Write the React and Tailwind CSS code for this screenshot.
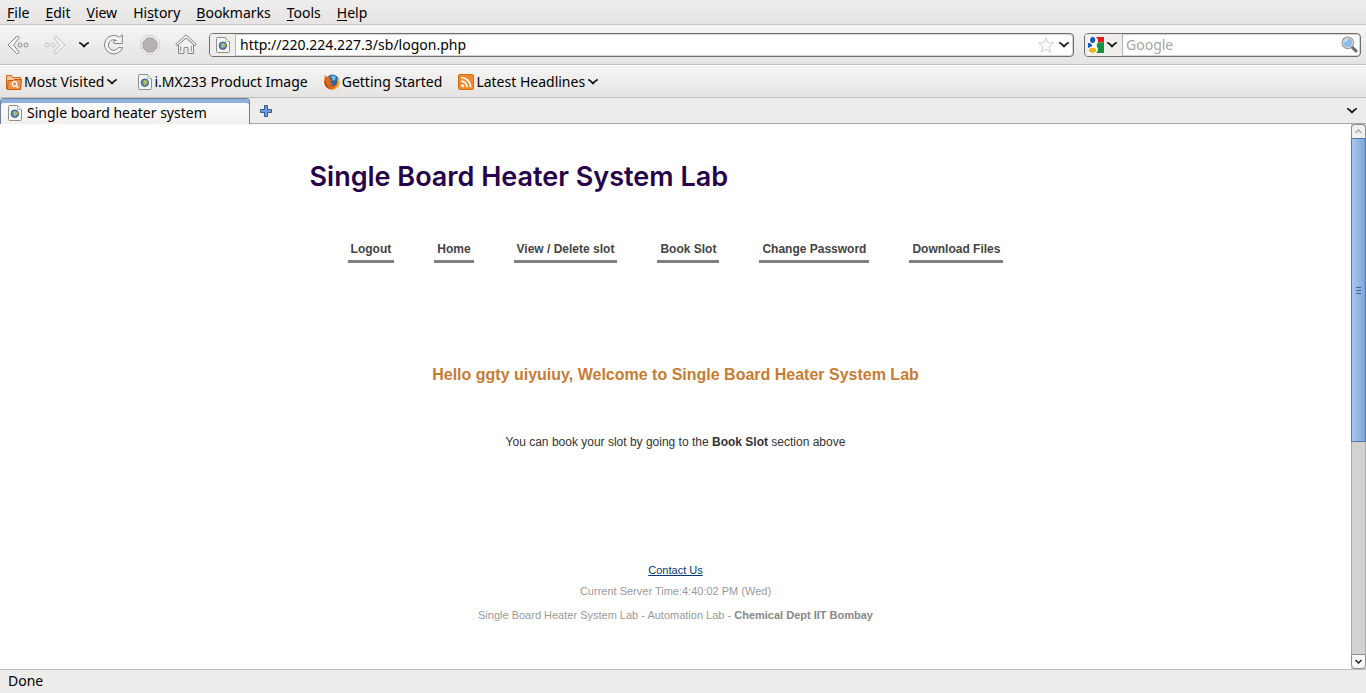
import React from "react";

const menus = [
  ["", "F", "ile"],
  ["", "E", "dit"],
  ["", "V", "iew"],
  ["Hi", "s", "tory"],
  ["", "B", "ookmarks"],
  ["", "T", "ools"],
  ["", "H", "elp"],
];

const links = ["Logout", "Home", "View / Delete slot", "Book Slot", "Change Password", "Download Files"];

function Chevron() {
  return (
    <svg width="12" height="8" viewBox="0 0 12 8" className="shrink-0" aria-hidden="true">
      <path d="M1.2 1.500C3 2.200 4.600 3.800 6 5.400C7.400 3.800 9 2.200 10.800 1.500" fill="none" stroke="#111" strokeWidth="1.800" />
    </svg>
  );
}

function PageIcon() {
  return (
    <svg width="14" height="16" viewBox="0 0 14 16" className="shrink-0" aria-hidden="true">
      <path d="M1.500.5h8l4 4v10q0 1-1 1h-11q-1 0-1-1v-13q0-1 1-1z" fill="#f5f5f3" stroke="#8f8f89" />
      <path d="M9.500.5v4h4z" fill="#fff" stroke="#b0b0aa" strokeWidth=".8" />
      <circle cx="6.800" cy="8.700" r="3.700" fill="#5c8cc4" stroke="#345c90" />
      <path d="M5.500 6.800l1.600-1 2.300 1.400-.2 2-1.800 1.400-.8 1-1-2z" fill="#b3bd5c" />
    </svg>
  );
}

function BackIcon({ flip = false }) {
  return (
    <svg width="22" height="20" viewBox="0 0 22 20" className={flip ? "-scale-x-100 opacity-40" : ""} aria-hidden="true">
      <path d="M9.500 1.500L1 10l8.500 8.500q2 .8 2.800-1.200L6.600 10l5.700-7.300q-.8-2-2.800-1.200z" fill="#f5f5f4" stroke="#858585" strokeLinejoin="round" />
      <circle cx="13" cy="10" r="2" fill="#eee" stroke="#8b8b8b" />
      <circle cx="19" cy="10" r="2" fill="#eee" stroke="#8b8b8b" />
    </svg>
  );
}

function ReloadIcon() {
  return (
    <svg width="20" height="21" viewBox="0 0 20 21" aria-hidden="true">
      <path
        d="M15.300 3.200L18.300.8V9.500H9.800V6.600H12.700A5.300 5.300 0 1 0 14.300 13.600H18.600A9.300 9.300 0 1 1 15.300 3.200z"
        fill="#f3f3f2"
        stroke="#858585"
        strokeLinejoin="round"
      />
    </svg>
  );
}

function StopIcon() {
  return (
    <svg width="20" height="20" viewBox="0 0 20 20" aria-hidden="true">
      <path d="M6 .7h8L19.300 6v8L14 19.300H6L.7 14V6z" fill="#f1f1f0" stroke="#d0d0cf" />
      <path d="M7 3h6l4 4v6l-4 4H7l-4-4V7z" fill="#b7b0b0" stroke="#aaa4a4" />
    </svg>
  );
}

function HomeIcon() {
  return (
    <svg width="22" height="21" viewBox="0 0 22 21" aria-hidden="true">
      <path d="M3.500 10v9.500H9v-6h4v6h5.500V10L11 4z" fill="#f2f2f1" stroke="#858585" />
      <path d="M2 11.800L.8 10.200 11 .9l10.200 9.300-1.200 1.600-9-7.800z" fill="#fafafa" stroke="#7f7f7f" strokeLinejoin="round" />
      <path d="M5.700 12v5.500M16.300 12v5.500M9 13.500h4" stroke="#8d8d8d" />
    </svg>
  );
}

function StarIcon() {
  return (
    <svg width="16" height="16" viewBox="0 0 16 16" aria-hidden="true">
      <path d="M8 .8l2 5h5.300l-4.200 3.600 1.500 5.700L8 12l-4.600 3.100 1.500-5.700L.7 5.800H6z" fill="#fff" stroke="#cfcfcf" strokeLinejoin="round" />
    </svg>
  );
}

function GoogleIcon() {
  return (
    <svg width="16" height="16" viewBox="0 0 16 16" aria-hidden="true">
      <path d="M8 0h8v5.500H8z" fill="#ee1c1c" />
      <path d="M8 16c2-1.600 2.500-4 .8-6.200C8 8.300 9 7.500 10 5.500h6V16z" fill="#0f953f" />
      <path d="M0 0h8c1.500 2 3 3.500 1.500 5.500-1.500 2-1.500 3-.5 4.300 1.500 2.200 1 4.700-1 6.200H0z" fill="#fff" />
      <path d="M0 5.800C3 6 4.500 8 4 9.300L0 11z" fill="#1858b8" />
      <ellipse cx="4.700" cy="3" rx="2.600" ry="3" fill="#1858b8" />
      <ellipse cx="4.500" cy="13.300" rx="3.700" ry="2.500" fill="#f5b411" />
    </svg>
  );
}

function SearchIcon() {
  return (
    <svg width="17" height="17" viewBox="0 0 17 17" aria-hidden="true">
      <path d="M11 11l4 4" stroke="#666" strokeWidth="3" strokeLinecap="round" />
      <circle cx="6.800" cy="6.800" r="5.400" fill="#8fbbea" stroke="#8d8d8d" strokeWidth="1.800" />
      <circle cx="6.800" cy="6.800" r="4.900" fill="none" stroke="#ececec" strokeWidth=".9" />
      <path d="M3.800 6.500A3 3 0 0 1 7 3.600" fill="none" stroke="#d5e7fa" strokeWidth="1.500" />
    </svg>
  );
}

function FolderIcon() {
  return (
    <svg width="16" height="16" viewBox="0 0 16 16" className="shrink-0" aria-hidden="true">
      <path d="M.5 15V1.500h5l1 2h8V15z" fill="#f7c79c" stroke="#cf6416" />
      <path d="M2 6.500h5l1-1h7.500l-1 10h-13z" fill="#eb9149" stroke="#c95b0c" />
      <circle cx="8.500" cy="10" r="2.300" fill="none" stroke="#fff" strokeWidth="1.200" />
      <path d="M10.200 11.700l2 2" stroke="#fff" strokeWidth="1.400" />
    </svg>
  );
}

function FirefoxIcon() {
  return (
    <svg width="16" height="16" viewBox="0 0 16 16" className="shrink-0" aria-hidden="true">
      <circle cx="8.500" cy="7" r="6.500" fill="#2c64a6" />
      <path d="M7 2q3-1.500 5 1l-1 3-2 1z" fill="#73bfe9" />
      <path d="M1 1.200L3.200 3Q5 2 6.300 3L5.500 5l2.400 1.200L6 7.500q.5 2 3 1.500-1 2.500-3.500 2 4 2.500 7-1 1.500-2 .5-6.500Q17 8 14.500 12 12 16 7.500 15.700.5 15 .4 8 .3 4 1 1.200z" fill="#df681b" />
      <path d="M13.300 3.500Q17 8 14.500 12 12 16 7.500 15.700q5-2 6.200-6.200z" fill="#f5b535" />
      <path d="M.8 5Q2 12 6 14.800.5 13 .4 8z" fill="#b53b12" />
    </svg>
  );
}

function FeedIcon() {
  return (
    <svg width="16" height="16" viewBox="0 0 16 16" className="shrink-0" aria-hidden="true">
      <rect x=".5" y=".5" width="15" height="15" rx="1.500" fill="#ef8b2c" stroke="#d96d10" />
      <circle cx="4.500" cy="11.700" r="1.500" fill="#fff" />
      <path d="M3 7.200a6 6 0 0 1 6 6M3 3.500a9.700 9.700 0 0 1 9.700 9.700" fill="none" stroke="#fff" strokeWidth="1.700" />
    </svg>
  );
}

function PlusIcon() {
  return (
    <svg width="12" height="12" viewBox="0 0 12 12" aria-hidden="true">
      <path d="M4.500.5h3v4h4v3h-4v4h-3v-4h-4v-3h4z" fill="#6b9bd8" stroke="#2f5b9c" strokeLinejoin="round" />
    </svg>
  );
}

const bar = "flex items-center border-b border-[#bfbebc] bg-linear-to-b from-[#f5f5f3] to-[#e5e4e2]";

export default function App() {
  return (
    <div className="flex h-screen flex-col bg-[#edecea] font-['Noto_Sans',sans-serif] text-sm text-black">
      <nav aria-label="Menu" className="flex h-6 shrink-0 items-center gap-4 bg-linear-to-b from-[#efeeed] to-[#e5e4e2] pt-0.5 pl-[7px]">
        {menus.map(([a, key, b]) => (
          <button key={key + b} type="button" className="leading-5">
            {a}<span className="underline underline-offset-2">{key}</span>{b}
          </button>
        ))}
      </nav>

      <div className={`${bar} h-[41px] shrink-0 border-t border-t-[#c9c8c6] pr-[5px] pl-[7px]`}>
        <div className="flex w-[202px] shrink-0 items-center">
          <button type="button" aria-label="Back" className="mr-[15px]"><BackIcon /></button>
          <button type="button" aria-label="Forward" disabled className="mr-3"><BackIcon flip /></button>
          <button type="button" aria-label="Recent pages" className="mr-3.5"><Chevron /></button>
          <button type="button" aria-label="Reload" className="mr-4"><ReloadIcon /></button>
          <button type="button" aria-label="Stop" disabled className="mr-[15px]"><StopIcon /></button>
          <button type="button" aria-label="Home page"><HomeIcon /></button>
        </div>
        <div className="flex h-6 min-w-0 flex-1 items-center overflow-hidden rounded-[4px] border border-[#6f6e6c] bg-white shadow-[inset_0_0_0_1px_#d5d4d2]">
          <span className="flex h-full w-[26px] shrink-0 items-center justify-center border-r border-[#b5b4b2] bg-[#efeeed]"><PageIcon /></span>
          <input aria-label="Address" defaultValue="http://220.224.227.3/sb/logon.php" className="h-5 min-w-0 flex-1 bg-transparent px-1 outline-none" />
          <button type="button" aria-label="Bookmark this page" className="mr-1"><StarIcon /></button>
          <button type="button" aria-label="Address history" className="mr-[3px]"><Chevron /></button>
        </div>
        <div className="ml-2.5 flex h-6 w-[277px] items-center overflow-hidden rounded-[4px] border border-[#6f6e6c] bg-white shadow-[inset_0_0_0_1px_#d5d4d2]">
          <button type="button" aria-label="Search engine" className="flex h-full w-[38px] shrink-0 items-center gap-0.5 border-r border-[#b5b4b2] bg-[#efeeed] pl-[3px]"><GoogleIcon /><Chevron /></button>
          <input aria-label="Search" placeholder="Google" className="h-5 min-w-0 flex-1 bg-transparent px-[3px] outline-none placeholder:text-[#a7a5a2]" />
          <button type="button" aria-label="Search" className="mr-0.5"><SearchIcon /></button>
        </div>
      </div>

      <nav aria-label="Bookmarks" className={`${bar} h-[33px] shrink-0 gap-4 border-t border-t-white pl-1.5`}>
        <button type="button" className="mr-1 flex items-center gap-0.5"><FolderIcon />Most Visited<Chevron /></button>
        <a href="#product" className="flex items-center gap-0.5"><PageIcon />i.MX233 Product Image</a>
        <a href="#start" className="flex items-center gap-0.5"><FirefoxIcon />Getting Started</a>
        <button type="button" className="flex items-center gap-0.5"><FeedIcon />Latest Headlines<Chevron /></button>
      </nav>

      <div className="flex h-[26px] shrink-0 items-center border-b border-[#a9a8a6] pr-2">
        <button type="button" className="flex h-[26px] w-[250px] items-center gap-[5px] rounded-t-[4px] border border-b-0 border-[#6d819d] bg-linear-to-b from-white to-[#f1f0ee] pt-[3px] pl-[7px] shadow-[inset_0_4px_0_#8db0df]">
          <PageIcon />Single board heater system
        </button>
        <button type="button" aria-label="New tab" className="ml-2.5"><PlusIcon /></button>
        <button type="button" aria-label="List all tabs" className="ml-auto"><Chevron /></button>
      </div>

      <div className="flex min-h-0 flex-1 bg-white">
        <main className="min-w-0 flex-1 overflow-hidden font-['Liberation_Sans',sans-serif] text-xs text-[#333]">
          <div className="mx-auto flex max-w-[732px] flex-col items-center pt-[37px]">
            <h1 className="self-start font-['Inter',sans-serif] text-[27px] leading-8 font-semibold text-[#26024b]">Single Board Heater System Lab</h1>
            <nav aria-label="Lab" className="mt-[46px] flex gap-10">
              {links.map((label) => (
                <a key={label} href="#lab" className="border-b-[3px] border-[#808080] px-[3px] pb-px leading-5 font-bold text-[#444]">{label}</a>
              ))}
            </nav>
            <h2 className="mt-[100px] text-base leading-6 font-bold text-[#c77c33]">Hello ggty uiyuiuy, Welcome to Single Board Heater System Lab</h2>
            <p className="mt-[47px] leading-4">You can book your slot by going to the <b>Book Slot</b> section above</p>
            <footer className="mt-28 flex flex-col items-center text-[11px] leading-4 text-[#999]">
              <a href="#contact" className="text-[#003876] underline">Contact Us</a>
              <p className="mt-[5px]">Current Server Time:4:40:02 PM (Wed)</p>
              <p className="mt-2">Single Board Heater System Lab - Automation Lab - <b className="text-[#888]">Chemical Dept IIT Bombay</b></p>
            </footer>
          </div>
        </main>
        <div className="flex w-[15px] shrink-0 flex-col bg-[#d3d2d0]">
          <button type="button" aria-label="Scroll up" className="flex h-3.5 shrink-0 items-center justify-center rounded-t-[4px] border border-b-0 border-[#8e8d8b] bg-[#f2f1f0]">
            <svg width="7" height="5" viewBox="0 0 7 5" aria-hidden="true"><path d="M.5 4l3-3 3 3" fill="none" stroke="#aaa" strokeWidth="1.500" /></svg>
          </button>
          <div className="min-h-0 flex-1 border-x border-[#aaa9a7]">
            <div className="-mx-px flex h-[59%] flex-col items-center justify-center gap-0.5 border border-[#5079af] bg-linear-to-r from-[#a9c6ec] to-[#7ea6da]">
              <span className="h-px w-[5px] bg-[#41669a]" />
              <span className="h-px w-[5px] bg-[#41669a]" />
              <span className="h-px w-[5px] bg-[#41669a]" />
            </div>
          </div>
          <button type="button" aria-label="Scroll down" className="flex h-[15px] shrink-0 items-center justify-center rounded-b-[4px] border border-[#8e8d8b] bg-[#f7f7f6]">
            <svg width="7" height="5" viewBox="0 0 7 5" aria-hidden="true"><path d="M.5 1l3 3 3-3" fill="none" stroke="#222" strokeWidth="1.500" /></svg>
          </button>
        </div>
      </div>

      <footer className="flex h-6 shrink-0 items-center border-t border-[#bfbebc] pb-0.5 pl-2">Done</footer>
    </div>
  );
}
